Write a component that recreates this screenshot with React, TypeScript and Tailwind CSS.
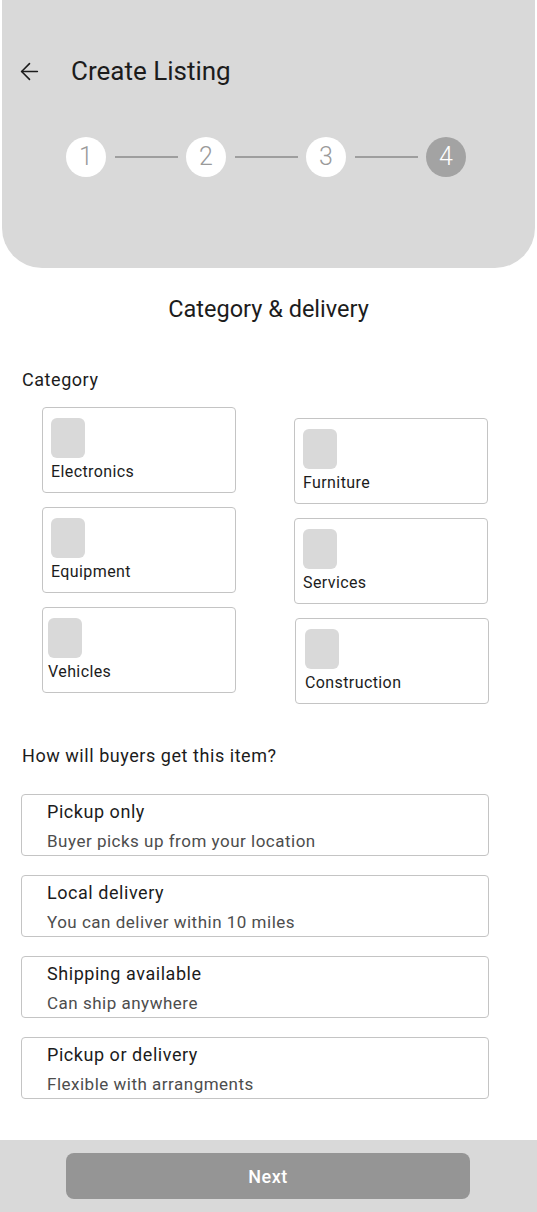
import { ArrowLeft } from 'lucide-react';

const categoriesLeft = ['Electronics', 'Equipment', 'Vehicles'];
const categoriesRight = ['Furniture', 'Services', 'Construction'];

const options = [
  { title: 'Pickup only', sub: 'Buyer picks up from your location' },
  { title: 'Local delivery', sub: 'You can deliver within 10 miles' },
  { title: 'Shipping available', sub: 'Can ship anywhere' },
  { title: 'Pickup or delivery', sub: 'Flexible with arrangments' },
];

function CategoryCard({ label }: { label: string }) {
  // the Vehicles card sits a few px further left in the mock
  const pad = label === 'Vehicles' ? 'pl-[5px]' : label === 'Construction' ? 'pl-[9px] ml-[1px]' : 'pl-[8px]';
  return (
    <div className={`w-[194px] h-[86px] border border-[#c4c4c4] rounded-[4px] bg-white pt-[10px] ${pad}`}>
      <div className="w-[34px] h-[40px] rounded-[6px] bg-[#d9d9d9]" />
      <div className="mt-[4px] text-[16px] leading-[20px] tracking-[0.4px] text-[#1c1c1c]">{label}</div>
    </div>
  );
}

function Step({ n, active }: { n: number; active?: boolean }) {
  return (
    <div
      className={
        active
          ? 'w-[40px] h-[40px] rounded-full bg-[#a3a3a3] text-white flex items-center justify-center text-[25px] font-light'
          : 'w-[40px] h-[40px] rounded-full bg-white text-[#9a9a9a] flex items-center justify-center text-[25px] font-light'
      }
    >
      {n}
    </div>
  );
}

function StepLine() {
  return <div className="w-[63px] h-[2px] bg-[#9e9e9e] mx-[8.5px]" />;
}

export default function App() {
  return (
    <div
      className="w-[537px] min-h-[1212px] bg-white flex flex-col text-[#1c1c1c]"
      style={{ fontFamily: 'Roboto, "Noto Sans", sans-serif' }}
    >
      <div className="mx-[2px] h-[268px] bg-[#d9d9d9] rounded-b-[40px] pt-[55px]">
        <div className="flex items-center h-[32px]">
          <ArrowLeft className="ml-[14px] w-[27px] h-[27px] text-[#1c1c1c]" strokeWidth={1.4} />
          <h1 className="ml-[28px] text-[26px] leading-[32px]">Create Listing</h1>
        </div>
        <div className="mt-[50px] ml-[64px] flex items-center">
          <Step n={1} />
          <StepLine />
          <Step n={2} />
          <StepLine />
          <Step n={3} />
          <StepLine />
          <Step n={4} active />
        </div>
      </div>

      <h2 className="mt-[27px] text-center text-[23.5px] leading-[28px]">Category &amp; delivery</h2>

      <div className="mt-[45px] ml-[22px] text-[18px] leading-[24px] tracking-[0.55px]">Category</div>

      <div className="mt-[15px] ml-[42px] flex gap-[58px]">
        <div className="flex flex-col gap-[14px]">
          {categoriesLeft.map((c) => (
            <CategoryCard key={c} label={c} />
          ))}
        </div>
        <div className="mt-[11px] flex flex-col gap-[14px]">
          {categoriesRight.map((c) => (
            <CategoryCard key={c} label={c} />
          ))}
        </div>
      </div>

      <div className="mt-[40px] ml-[22px] text-[18px] leading-[24px] tracking-[0.55px]">
        How will buyers get this item?
      </div>

      <div className="mt-[26px] ml-[21px] w-[468px] flex flex-col gap-[19px]">
        {options.map((o) => (
          <div key={o.title} className="h-[62px] border border-[#c4c4c4] rounded-[4px] pl-[25px] pt-[5px]">
            <div className="text-[18px] leading-[24px] tracking-[0.55px] text-[#1c1c1c]">{o.title}</div>
            <div className="mt-[6px] text-[17px] leading-[22px] tracking-[0.5px] text-[#4d4d4d]">{o.sub}</div>
          </div>
        ))}
      </div>

      <div className="mt-auto h-[72px] bg-[#d9d9d9] pt-[13px]">
        <button className="ml-[66px] w-[404px] h-[46px] rounded-[8px] bg-[#959595] text-white text-[18px] font-medium tracking-[0.5px]">
          Next
        </button>
      </div>
    </div>
  );
}
